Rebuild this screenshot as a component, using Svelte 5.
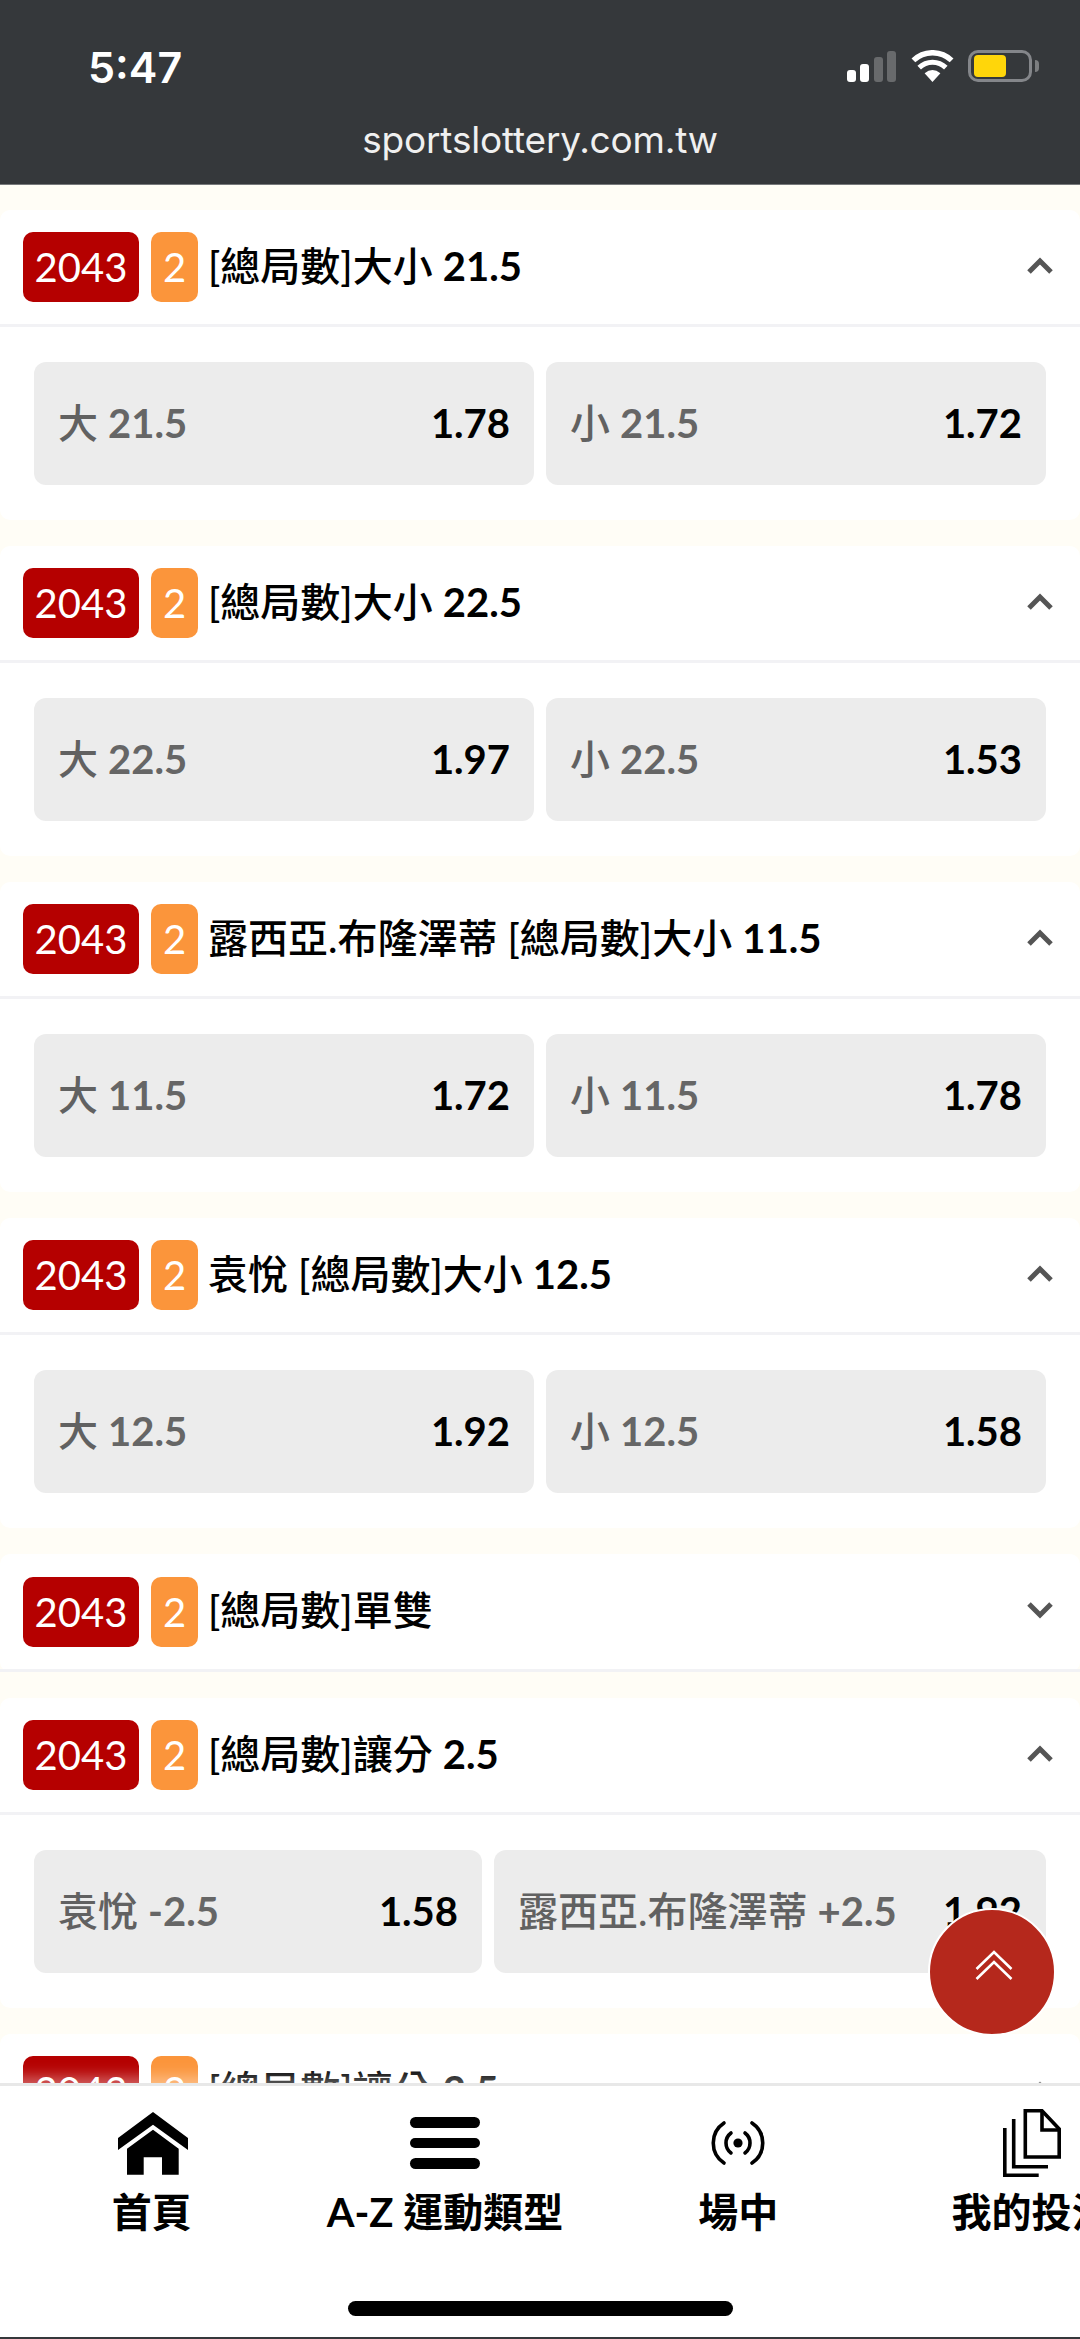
<script>
  const base = (a, an, b, c, cn, d) => [{ l: a, n: an, o: b }, { l: c, n: cn, o: d }];
  const cards = [
    { title: '[總局數]大小', num: '21.5', open: true, opts: base('大', '21.5', '1.78', '小', '21.5', '1.72') },
    { title: '[總局數]大小', num: '22.5', open: true, opts: base('大', '22.5', '1.97', '小', '22.5', '1.53') },
    { title: '露西亞.布隆澤蒂 [總局數]大小', num: '11.5', open: true, opts: base('大', '11.5', '1.72', '小', '11.5', '1.78') },
    { title: '袁悅 [總局數]大小', num: '12.5', open: true, opts: base('大', '12.5', '1.92', '小', '12.5', '1.58') },
    { title: '[總局數]單雙', num: '', open: false, opts: [] },
    { title: '[總局數]讓分', num: '2.5', open: true, split: true, opts: base('袁悅', '-2.5', '1.58', '露西亞.布隆澤蒂', '+2.5', '1.92') },
    { title: '[總局數]讓分', num: '2.5', open: true, split: true, opts: [] }
  ];
</script>

<div class="page">
  <header class="top">
    <div class="status">
      <span class="time">5:47</span>
      <div class="sys">
        <div class="signal">
          <i class="b1"></i><i class="b2"></i><i class="b3"></i><i class="b4"></i>
        </div>
        <svg class="wifi" width="43" height="32" viewBox="0 0 43 32" aria-hidden="true">
          <path d="M21.5 32 L13.6 23.2 Q21.5 16.6 29.4 23.2 Z" fill="#fff" />
          <path d="M8.2 17.6 A19 19 0 0 1 34.8 17.6" fill="none" stroke="#fff" stroke-width="5" />
          <path d="M2.4 10.4 A27.5 27.5 0 0 1 40.6 10.4" fill="none" stroke="#fff" stroke-width="5.4" />
        </svg>
        <div class="battery"><div class="level"></div></div>
        <div class="tip"></div>
      </div>
    </div>
    <div class="url">sportslottery.com.tw</div>
  </header>

  <main class="list">
    {#each cards as card}
      <section class="card">
        <div class="head" class:closed={!card.open}>
          <span class="num">2043</span>
          <span class="set">2</span>
          <span class="title">{card.title}{#if card.num}{' '}<b>{card.num}</b>{/if}</span>
          <svg class="chev" class:down={!card.open} width="28" height="18" viewBox="0 0 28 18" aria-hidden="true">
            <path d="M3 15 L14 4 L25 15" fill="none" stroke="#555" stroke-width="5" />
          </svg>
        </div>
        {#if card.opts.length}
          <div class="opts" class:split={card.split}>
            {#each card.opts as opt}
              <div class="opt">
                <span class="label">{opt.l} <b>{opt.n}</b></span>
                <span class="odds">{opt.o}</span>
              </div>
            {/each}
          </div>
        {/if}
      </section>
    {/each}
  </main>

  <nav class="nav">
    <div class="tabs">
      <div class="tab">
        <div class="icon">
          <svg class="house" width="70" height="63" viewBox="0 0 70 63" aria-hidden="true">
            <path d="M35 0 L70 26 V38 L35 12.7 L0 38 V26 Z" />
            <path d="M35 17.7 L60.7 36.7 V62.7 H44 V45.3 H25.7 V62.7 H9 V36.7 Z" />
          </svg>
        </div>
        <span>首頁</span>
      </div>
      <div class="tab">
        <div class="icon">
          <div class="bars"><i></i><i></i><i></i></div>
        </div>
        <span>A-Z 運動類型</span>
      </div>
      <div class="tab">
        <div class="icon">
          <svg width="60" height="50" viewBox="0 0 60 50" fill="none" stroke="#000" stroke-width="3.6" stroke-linecap="round" aria-hidden="true">
            <circle cx="30" cy="25" r="4.6" fill="#000" stroke="none" />
            <path d="M16 5 A24 24 0 0 0 16 45" />
            <path d="M44 5 A24 24 0 0 1 44 45" />
            <path d="M23 15 A12.5 12.5 0 0 0 23 35" />
            <path d="M37 15 A12.5 12.5 0 0 1 37 35" />
          </svg>
        </div>
        <span>場中</span>
      </div>
      <div class="tab">
        <div class="icon">
          <svg width="58" height="68" viewBox="0 0 58 68" fill="none" stroke="#000" stroke-width="3.6" aria-hidden="true">
            <path d="M22.3 1.8 H39 L56.2 20 V48 H22.3 Z" />
            <path d="M39 1.8 V21 H56.2" />
            <path d="M10.7 10 V57.7 H45" />
            <path d="M1.8 19 V66.2 H35.7" />
          </svg>
        </div>
        <span>我的投注</span>
      </div>
    </div>
    <div class="home"></div>
    <div class="edge"></div>
  </nav>

  <div class="fab">
    <svg width="38" height="32" viewBox="0 0 38 32" fill="none" stroke="#fff" stroke-width="2.6" aria-hidden="true">
      <path d="M1.5 19 L19 2 L36.5 19" />
      <path d="M1.5 29 L19 12 L36.5 29" />
    </svg>
  </div>
</div>

<style>
  :global(body) {
    margin: 0;
    background: #fff;
  }
  .page {
    position: relative;
    width: 1080px;
    height: 2339px;
    display: flex;
    flex-direction: column;
    overflow: hidden;
    font-family: Lato, "Noto Sans CJK TC", sans-serif;
    color: #000;
  }
  .top {
    flex: none;
    height: 185px;
    box-sizing: border-box;
    background: #35383b;
    border-bottom: 1px solid #77797b;
    color: #fff;
  }
  .status {
    height: 118px;
    display: flex;
    justify-content: space-between;
    box-sizing: border-box;
    padding: 42px 41px 0 88px;
  }
  .time {
    font-family: Inter, sans-serif;
    font-weight: 600;
    font-size: 43px;
    line-height: 50px;
  }
  .sys {
    display: flex;
    align-items: flex-start;
    padding-top: 8px;
  }
  .signal {
    display: flex;
    align-items: flex-end;
    gap: 4.5px;
    height: 32px;
    margin-right: 15px;
  }
  .signal i {
    display: block;
    width: 9px;
    border-radius: 3px;
    background: #fff;
  }
  .signal .b1 { height: 12px; }
  .signal .b2 { height: 18px; }
  .signal .b3 { height: 25px; background: #686a6c; }
  .signal .b4 { height: 31px; background: #686a6c; }
  .wifi { margin-right: 14px; }
  .battery {
    box-sizing: border-box;
    width: 64px;
    height: 32px;
    border: 3px solid #84868a;
    border-radius: 10px;
    padding: 2px 3px;
  }
  .level {
    width: 32px;
    height: 22px;
    border-radius: 4px;
    background: #ffd60a;
  }
  .tip {
    width: 4px;
    height: 12px;
    margin: 10px 0 0 3px;
    border-radius: 0 6px 6px 0;
    background: #7c7e80;
  }
  .url {
    text-align: center;
    font-family: Inter, sans-serif;
    font-size: 37px;
    letter-spacing: -0.2px;
    line-height: 44px;
    color: #f0f0f0;
  }
  .list {
    flex: 1;
    min-height: 0;
    overflow: hidden;
    background: #fffdf6;
    padding-top: 25px;
    display: flex;
    flex-direction: column;
    gap: 26px;
  }
  .card {
    flex: none;
    background: #fff;
    border-radius: 10px;
  }
  .head {
    height: 114px;
    display: flex;
    align-items: center;
    padding: 0 26px 0 23px;
    border-bottom: 3px solid #f2f2f5;
  }
  .head.closed { height: 115px; }
  .num,
  .set {
    height: 70px;
    display: flex;
    align-items: center;
    justify-content: center;
    border-radius: 10px;
    color: #fff;
    font-size: 40px;
  }
  .num {
    width: 116px;
    background: #b50000;
  }
  .set {
    width: 47px;
    margin-left: 12px;
    background: #fb953b;
  }
  .title {
    flex: 1;
    margin-left: 10px;
    font-size: 40px;
    line-height: 60px;
    margin-top: -3px;
    font-weight: 500;
    white-space: nowrap;
  }
  .title b { font-weight: 700; }
  .chev { margin-top: -3px; }
  .chev.down { transform: rotate(180deg); }
  .opts {
    display: grid;
    grid-template-columns: 500px 500px;
    gap: 12px;
    padding: 35px 34px;
  }
  .opts.split { grid-template-columns: 448px 552px; }
  .opt {
    height: 123px;
    box-sizing: border-box;
    display: flex;
    align-items: center;
    justify-content: space-between;
    padding: 0 24px 3px;
    background: #ececec;
    border-radius: 12px;
    font-size: 40px;
  }
  .label { color: #616161; font-weight: 500; white-space: nowrap; margin-top: -2px; }
  .label b { font-weight: 700; color: #666; }
  .odds { font-weight: 700; color: #000; margin-top: 2px; }
  .nav {
    flex: none;
    position: relative;
    background: #fff;
    border-top: 3px solid #e8e8e8;
    box-shadow: 0 -6px 14px rgba(255, 255, 255, 0.4);
    overflow: hidden;
    padding-top: 22px;
  }
  .tabs {
    display: flex;
    padding-left: 5px;
  }
  .tab {
    flex: none;
    width: 293.3px;
    display: flex;
    flex-direction: column;
    align-items: center;
    white-space: nowrap;
    font-size: 40px;
    font-weight: 700;
    line-height: 68px;
  }
  .icon {
    height: 70px;
    display: flex;
    align-items: center;
    justify-content: center;
  }
  .house { margin-left: 2px; }
  .bars {
    display: flex;
    flex-direction: column;
    gap: 10px;
    width: 70px;
  }
  .bars i {
    display: block;
    height: 10.5px;
    border-radius: 6px;
    background: #000;
  }
  .home {
    width: 385px;
    height: 15px;
    margin: 55px 0 21px 348px;
    border-radius: 8px;
    background: #000;
  }
  .edge {
    height: 2px;
    background: #35383b;
  }
  .fab {
    position: absolute;
    right: 24px;
    bottom: 303px;
    width: 124px;
    height: 124px;
    border: 2px solid #fff;
    border-radius: 50%;
    background: #b5281c;
    display: flex;
    align-items: center;
    justify-content: center;
  }
  .fab svg { margin: 0 0 12px 4px; }
</style>
